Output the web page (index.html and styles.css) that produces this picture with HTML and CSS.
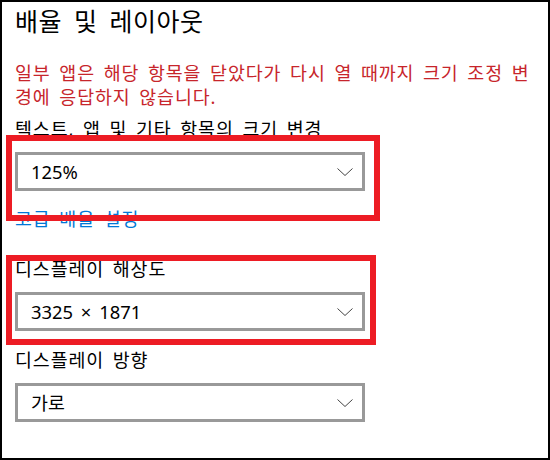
FILE: index.html
```html
<!DOCTYPE html>
<html lang="ko">
<head>
<meta charset="utf-8">
<link rel="stylesheet" href="styles.css">
</head>
<body>
<div class="window">
  <h1 class="title">배율 및 레이아웃</h1>
  <p class="warning">일부 앱은 해당 항목을 닫았다가 다시 열 때까지 크기 조정 변<br>경에 응답하지 않습니다.</p>

  <div class="field field-scale">
    <div class="label">텍스트, 앱 및 기타 항목의 크기 변경</div>
    <div class="dropdown">
      <span class="value">125%</span>
      <svg class="chevron" width="16" height="8" viewBox="0 0 16 8"><polyline points="0.5,0.5 8,7.5 15.5,0.5" fill="none" stroke="#444" stroke-width="1"/></svg>
    </div>
  </div>

  <a class="link" href="#">고급 배율 설정</a>

  <div class="field field-res">
    <div class="label">디스플레이 해상도</div>
    <div class="dropdown">
      <span class="value">3325 × 1871</span>
      <svg class="chevron" width="16" height="8" viewBox="0 0 16 8"><polyline points="0.5,0.5 8,7.5 15.5,0.5" fill="none" stroke="#444" stroke-width="1"/></svg>
    </div>
  </div>

  <div class="field field-orient">
    <div class="label">디스플레이 방향</div>
    <div class="dropdown">
      <span class="value">가로</span>
      <svg class="chevron" width="16" height="8" viewBox="0 0 16 8"><polyline points="0.5,0.5 8,7.5 15.5,0.5" fill="none" stroke="#444" stroke-width="1"/></svg>
    </div>
  </div>

  <div class="annot annot-1"></div>
  <div class="annot annot-2"></div>
</div>
</body>
</html>
```

FILE: styles.css
```css
html, body {
  margin: 0;
  padding: 0;
  background: #fff;
}

.window {
  position: relative;
  box-sizing: border-box;
  width: 550px;
  height: 460px;
  border: 2px solid #000;
  padding: 0 0 0 13px;
  display: flex;
  flex-direction: column;
  align-items: flex-start;
  font-family: "Noto Sans", "Noto Sans CJK KR", sans-serif;
  font-size: 18.4px;
  line-height: 24px;
  word-spacing: 3px;
  letter-spacing: 0.9px;
  color: #000;
}

.title {
  margin: 4px 0 0 0;
  font-size: 25px;
  line-height: 30px;
  font-weight: normal;
  word-spacing: 5px;
  letter-spacing: 0.5px;
}

.warning {
  margin: 25px 0 0 0;
  color: #c7252b;
}

.field {
  display: flex;
  flex-direction: column;
  align-items: flex-start;
}

.field-scale {
  margin-top: 8px;
}

.field-res {
  margin-top: 26px;
}

.field-orient {
  margin-top: 17px;
}

.label {
  margin-bottom: 11px;
}

.dropdown {
  box-sizing: border-box;
  width: 350px;
  height: 39px;
  border: 3px solid #999;
  padding: 0 9px 0 13px;
  display: flex;
  align-items: center;
  justify-content: space-between;
}

.value {
  letter-spacing: 0;
}

.chevron {
  display: block;
}

.link {
  margin-top: 16px;
  color: #0078d7;
  text-decoration: none;
}

.annot {
  position: absolute;
  box-sizing: border-box;
  border: 6px solid #ed1c24;
}

.annot-1 {
  left: 4px;
  top: 133px;
  width: 374px;
  height: 86px;
}

.annot-2 {
  left: 4px;
  top: 253px;
  width: 370px;
  height: 90px;
}
```
